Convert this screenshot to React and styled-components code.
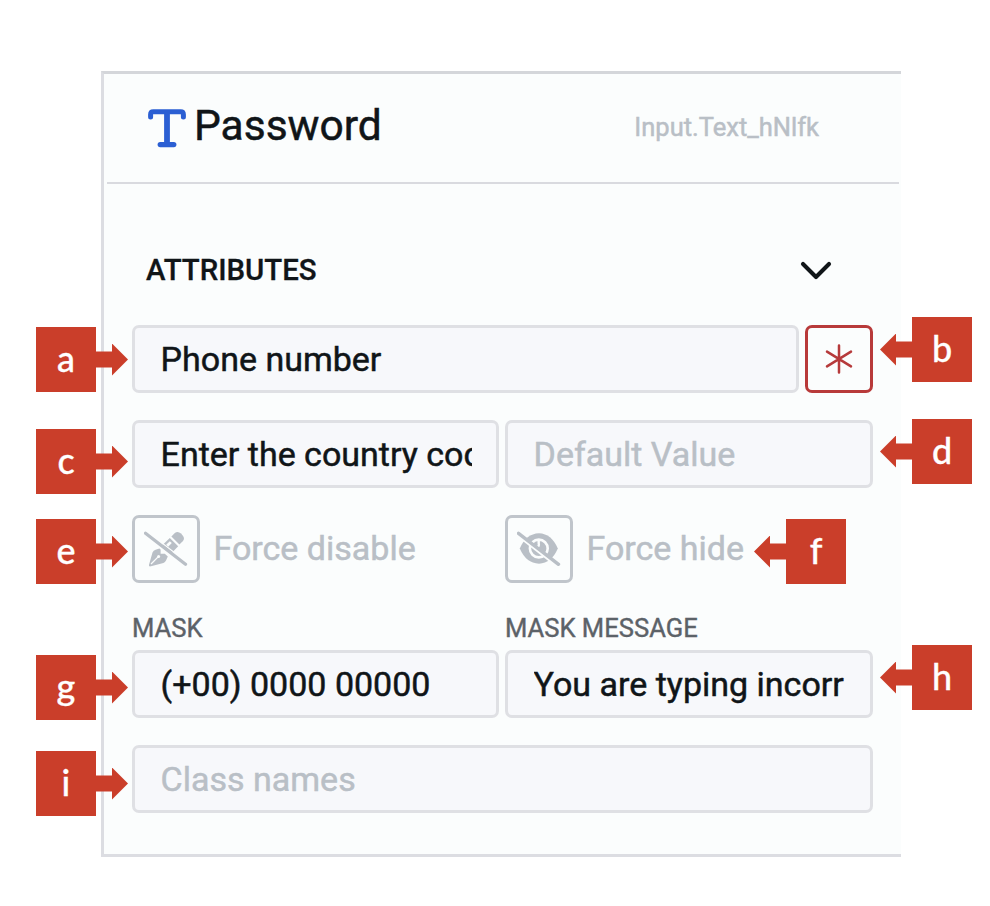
import React from "react";
import styled, { createGlobalStyle } from "styled-components";

const GlobalStyle = createGlobalStyle`
  * { box-sizing: border-box; }
  body { margin: 0; background: #fff; font-family: Roboto, sans-serif; }
`;

const Page = styled.main`
  position: relative;
  width: 990px;
  height: 906px;
  padding: 71px 0 0 101px;
  overflow: hidden;
`;

const Panel = styled.section`
  width: 800px;
  height: 786px;
  background: #fbfdfd;
  border: solid #dcdde2;
  border-width: 3px 0 3px 3px;
  border-top-color: #d4d6da;
`;

const Header = styled.header`
  display: flex;
  align-items: center;
  height: 110px;
  margin: 0 2px 0 3px;
  padding: 0 80px 0 41px;
  border-bottom: 2px solid #d9dadf;
`;

const Title = styled.h1`
  flex: 1;
  margin: 0 0 4px 8px;
  font-size: 42.5px;
  font-weight: 400;
  line-height: 50px;
  color: #101518;
  -webkit-text-stroke: 0.5px #101518;
`;

const ComponentId = styled.span`
  font-size: 25.5px;
  line-height: 30px;
  margin-bottom: 2px;
  color: #b9bfc6;
  -webkit-text-stroke: 0.5px #b9bfc6;
`;

const SectionHead = styled.div`
  display: flex;
  align-items: center;
  justify-content: space-between;
  height: 40px;
  margin-top: 67px;
  padding: 0 69px 0 42px;
`;

const SectionTitle = styled.h2`
  margin: 0 0 2px;
  font-size: 29.4px;
  font-weight: 500;
  line-height: 36px;
  color: #101518;
  -webkit-text-stroke: 0.3px #101518;
`;

const Form = styled.div`
  display: flex;
  flex-direction: column;
  width: 741px;
  margin: 34px 0 0 28px;
`;

const Row = styled.div`
  display: grid;
  grid-template-columns: ${(p) => p.$columns || "367px 368px"};
  column-gap: 6px;
  margin-bottom: ${(p) => p.$gap ?? 27}px;
`;

const Field = styled.div`
  display: flex;
  align-items: center;
  height: 68px;
  padding: 0 24px 0 25.6px;
  border: 3px solid #dfe0e4;
  border-radius: 7px;
  background: #f7f8fb;
`;

const FieldText = styled.span`
  flex: 1;
  min-width: 0;
  overflow: hidden;
  white-space: nowrap;
  font-size: 34px;
  line-height: 44px;
  color: ${(p) => (p.$placeholder ? "#b9bfc6" : "#101518")};
  -webkit-text-stroke: 0.5px currentColor;
`;

const IconButton = styled.button`
  display: flex;
  align-items: center;
  justify-content: center;
  width: 68px;
  height: 68px;
  padding: 0;
  border: ${(p) => (p.$required ? "3px solid #b83a3a" : "3px solid #c0c5cb")};
  border-radius: 7px;
  background: #fbfdfd;
`;

const Toggle = styled.div`
  display: flex;
  align-items: center;
  gap: 13.5px;
`;

const ToggleLabel = styled.span`
  margin-bottom: 2px;
  font-size: 34px;
  line-height: 40px;
  white-space: nowrap;
  color: #b9bfc6;
  -webkit-text-stroke: 0.5px #b9bfc6;
`;

const Caption = styled.label`
  font-size: 25.6px;
  line-height: 30px;
  white-space: nowrap;
  color: #5c6268;
  -webkit-text-stroke: 0.4px #5c6268;
`;

const Callout = styled.div`
  position: absolute;
  left: ${(p) => p.$x}px;
  top: ${(p) => p.$y}px;
  display: flex;
  flex-direction: ${(p) => (p.$side === "right" ? "row-reverse" : "row")};
  align-items: center;
`;

const CalloutBox = styled.div`
  width: 60px;
  height: 65px;
  background: #ca3e2a;
  color: #fff;
  font: 500 36px/62px Lato, sans-serif;
  text-align: center;
  -webkit-text-stroke: 0.3px #fff;
`;

const CalloutArrow = styled.div`
  width: 32px;
  height: 32px;
  background: #ca3e2a;
  clip-path: polygon(0 25%, 50% 25%, 50% 0, 100% 50%, 50% 100%, 50% 75%, 0 75%);
  transform: ${(p) => (p.$side === "right" ? "scaleX(-1)" : "none")};
`;

const TextIcon = () => (
  <svg width="38" height="40" viewBox="0 0 38 40" fill="none" stroke="#2b5fd3" strokeLinecap="round" strokeLinejoin="round">
    <path d="M2.6 9V6.5Q2.6 3.8 5.3 3.8H32.7Q35.4 3.8 35.4 6.5V9" strokeWidth="5" />
    <path d="M19 4V36.5" strokeWidth="5.8" strokeLinecap="butt" />
    <path d="M12.2 36.6H25.8" strokeWidth="5.2" />
  </svg>
);

const Chevron = () => (
  <svg width="32" height="20" viewBox="0 0 32 20" fill="none" stroke="#101518" strokeWidth="4.1" strokeLinecap="round" strokeLinejoin="round">
    <path d="M3 3L16 16L29 3" />
  </svg>
);

const Asterisk = () => (
  <svg width="30" height="32" viewBox="0 0 30 32" stroke="#b63a3b" strokeWidth="2.5" strokeLinecap="round">
    <path d="M15 2.4V29.6M3 8.6L27 23.4M27 8.6L3 23.4" />
  </svg>
);

const PenOff = () => (
  <svg width="44" height="38" viewBox="0 0 44 38">
    <g fill="#b9bfc6">
      <path d="M27.4 6.5L30.8 3.1Q33.8 .8 37 3.6L38.7 5.4Q41.2 8.4 38.7 11.2L35.4 14.4Z" />
      <path fillRule="evenodd" d="M18.5 15L25.8 7.9L34.2 16.3L27.4 23.2ZM22.2 14.8L24.2 16.7L27.8 13L25.8 11.2Z" />
      <path d="M8.5 22.6Q9.4 20.4 11.6 19.8L15.4 18.6L16.6 19.6V23.8H20.8L23.8 26.4L22 30.6Q21.2 32.4 19.4 33L6 36.4Q4.6 36.4 5 34.8Z" />
    </g>
    <path d="M7 34L14.4 26.6" stroke="#fbfdfd" strokeWidth="1.3" />
    <circle cx="14.6" cy="26.6" r="1.5" fill="#fbfdfd" />
    <path d="M3.5 1.8L43.5 32.8" stroke="#fbfdfd" strokeWidth="1.2" />
    <path d="M1.5 3.3L41.5 34.3" stroke="#b9bfc6" strokeWidth="3.3" strokeLinecap="round" />
  </svg>
);

const EyeOff = () => (
  <svg width="44" height="38" viewBox="0 0 44 38">
    <path d="M2.8 18.5Q9 3.8 22 3.3Q34.5 3.8 40.8 18.5Q34.5 33.2 22 33.7Q9 33.2 2.8 18.5Z" fill="#b9bfc6" />
    <circle cx="21.8" cy="18.5" r="8.9" fill="none" stroke="#fbfdfd" strokeWidth="2.6" />
    <path d="M21.7 11V13.4Q22.8 17.2 18.6 17" fill="none" stroke="#fbfdfd" strokeWidth="2.4" />
    <path d="M-1 4.2L39.5 35.6" stroke="#fbfdfd" strokeWidth="2.6" />
    <path d="M1.5 3.3L41.5 34.3" stroke="#b9bfc6" strokeWidth="3.4" strokeLinecap="round" />
  </svg>
);

const callouts = [
  { id: "a", x: 36, y: 327, side: "left" },
  { id: "b", x: 880, y: 317, side: "right" },
  { id: "c", x: 36, y: 429, side: "left" },
  { id: "d", x: 880, y: 419, side: "right" },
  { id: "e", x: 36, y: 519, side: "left" },
  { id: "f", x: 754, y: 519, side: "right" },
  { id: "g", x: 36, y: 655, side: "left" },
  { id: "h", x: 880, y: 645, side: "right" },
  { id: "i", x: 36, y: 751, side: "left" },
];

export default function App() {
  return (
    <Page>
      <GlobalStyle />
      <Panel>
        <Header>
          <TextIcon />
          <Title>Password</Title>
          <ComponentId>Input.Text_hNlfk</ComponentId>
        </Header>
        <SectionHead>
          <SectionTitle>ATTRIBUTES</SectionTitle>
          <Chevron />
        </SectionHead>
        <Form>
          <Row $columns="667px 68px">
            <Field><FieldText>Phone number</FieldText></Field>
            <IconButton $required aria-label="Required"><Asterisk /></IconButton>
          </Row>
          <Row>
            <Field><FieldText>Enter the country code</FieldText></Field>
            <Field><FieldText $placeholder>Default Value</FieldText></Field>
          </Row>
          <Row $gap={30}>
            <Toggle>
              <IconButton aria-label="Force disable"><PenOff /></IconButton>
              <ToggleLabel>Force disable</ToggleLabel>
            </Toggle>
            <Toggle>
              <IconButton aria-label="Force hide"><EyeOff /></IconButton>
              <ToggleLabel>Force hide</ToggleLabel>
            </Toggle>
          </Row>
          <Row $gap={7}>
            <Caption>MASK</Caption>
            <Caption>MASK MESSAGE</Caption>
          </Row>
          <Row>
            <Field><FieldText>(+00) 0000 00000</FieldText></Field>
            <Field><FieldText>You are typing incorr</FieldText></Field>
          </Row>
          <Row $columns="1fr">
            <Field><FieldText $placeholder>Class names</FieldText></Field>
          </Row>
        </Form>
      </Panel>
      {callouts.map((c) => (
        <Callout key={c.id} $x={c.x} $y={c.y} $side={c.side}>
          <CalloutBox>{c.id}</CalloutBox>
          <CalloutArrow $side={c.side} />
        </Callout>
      ))}
    </Page>
  );
}
